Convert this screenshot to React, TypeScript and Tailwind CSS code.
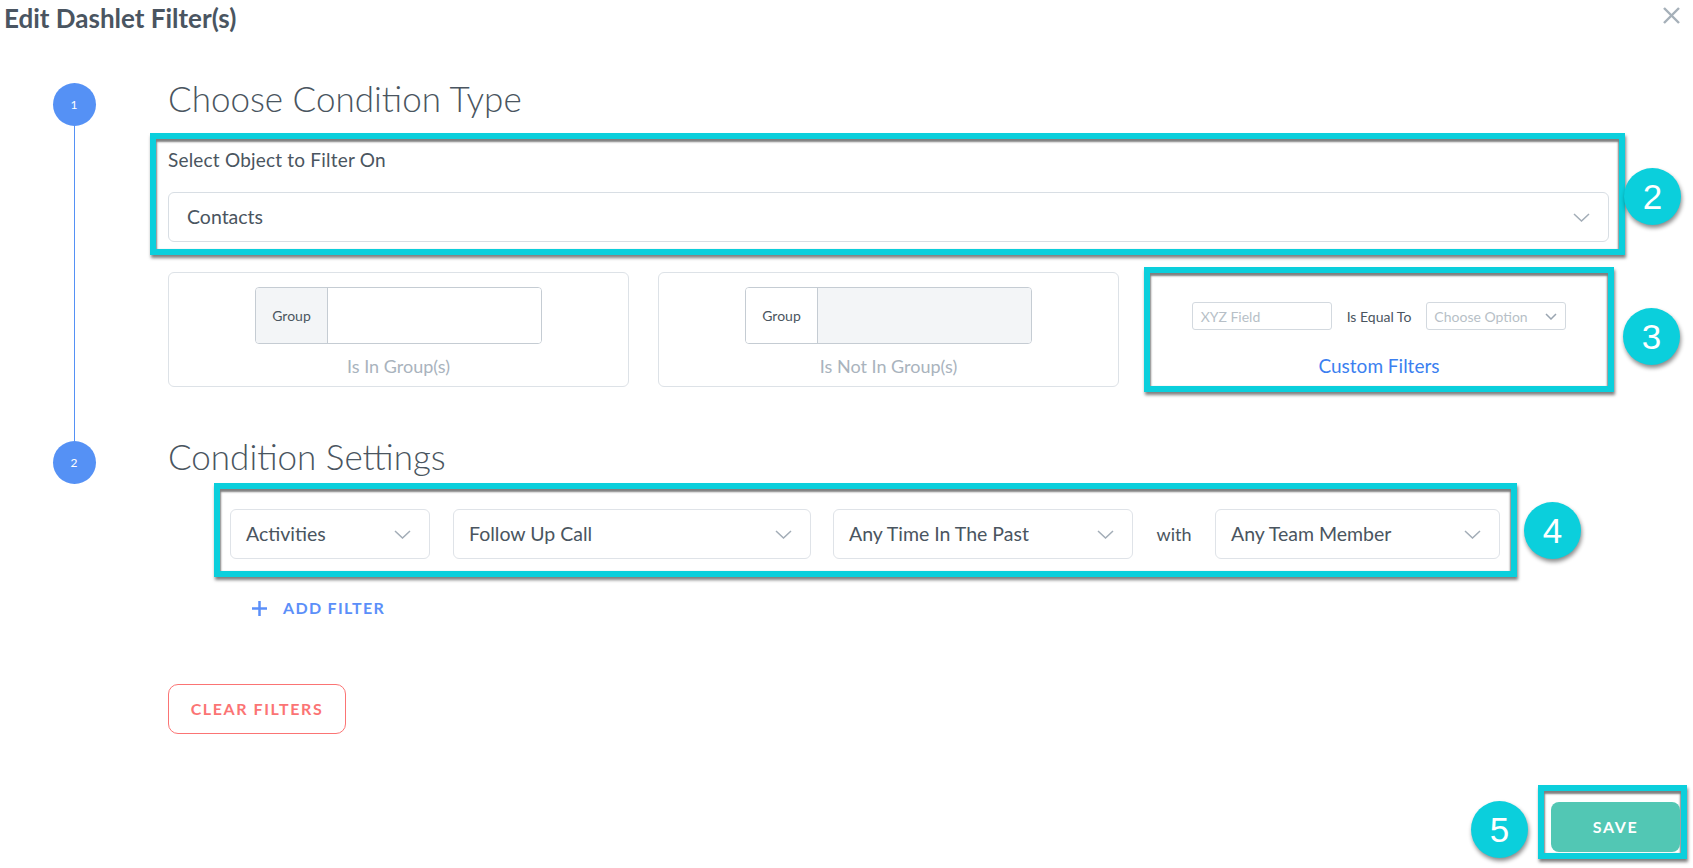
import React from 'react'

// annotation frame used by the screenshot callouts
const frame =
  'border-[6px] border-[#0bcfdc] bg-white shadow-[1px_3px_3px_rgba(0,0,0,0.5),inset_0_2px_2px_1px_rgba(0,0,0,0.5)]'

function Badge({ n, className }: { n: number; className: string }) {
  return (
    <div
      className={`absolute w-[57px] h-[57px] rounded-full bg-[#0bcfdc] text-white flex items-center justify-center text-[35px] leading-none font-['Liberation_Sans',Arial,sans-serif] shadow-[1px_3px_4px_rgba(0,0,0,0.45)] ${className}`}
    >
      {n}
    </div>
  )
}

function Chevron({ small }: { small?: boolean }) {
  return small ? (
    <svg width="12" height="7" viewBox="0 0 12 7" fill="none">
      <polyline points="1,1 6,6 11,1" stroke="#9aa5b1" strokeWidth="1.5" />
    </svg>
  ) : (
    <svg width="17" height="9" viewBox="0 0 17 9" fill="none">
      <polyline points="1,1 8.5,8 16,1" stroke="#a3adb7" strokeWidth="1.5" />
    </svg>
  )
}

function Select({ label, w }: { label: string; w: string }) {
  return (
    <div
      className={`h-[50px] shrink-0 flex items-center justify-between rounded-[6px] border border-[#dfe3e8] bg-white pl-[15px] pr-[18px] text-[19.5px] text-[#4a5560] ${w}`}
    >
      <span>{label}</span>
      <Chevron />
    </div>
  )
}

function Step({ n }: { n: number }) {
  return (
    <div className="w-[43px] h-[43px] rounded-full bg-[#5591f5] text-white text-[12px] flex items-center justify-center shrink-0">
      {n}
    </div>
  )
}

function GroupCard({ label, shaded }: { label: string; shaded: 'addon' | 'field' }) {
  return (
    <div className="h-[115px] rounded-[6px] border border-[#dde2e7] bg-white flex flex-col items-center pt-[14px]">
      <div className="w-[287px] h-[57px] flex rounded-[4px] border border-[#c5ccd3] overflow-hidden">
        <div
          className={`w-[72px] flex items-center justify-center border-r border-[#c5ccd3] text-[14px] text-[#4a5560] ${
            shaded === 'addon' ? 'bg-[#f3f5f7]' : 'bg-white'
          }`}
        >
          Group
        </div>
        <div className={`flex-1 ${shaded === 'field' ? 'bg-[#f3f5f7]' : 'bg-white'}`} />
      </div>
      <div className="mt-[11px] text-[18px] leading-[22px] text-[#a9b3bd]">{label}</div>
    </div>
  )
}

export default function App() {
  return (
    <div className="relative w-[1693px] h-[868px] overflow-hidden bg-white font-['Lato',sans-serif]">
      {/* header */}
      <div className="pt-[3px] px-[4px] text-[26px] leading-[30px] font-bold text-[#4a5561]">
        Edit Dashlet Filter(s)
      </div>
      <button className="absolute top-[7px] right-[13px]">
        <svg width="17" height="17" viewBox="0 0 17 17" fill="none">
          <line x1="1" y1="1" x2="16" y2="16" stroke="#a6b0b9" strokeWidth="2.4" />
          <line x1="16" y1="1" x2="1" y2="16" stroke="#a6b0b9" strokeWidth="2.4" />
        </svg>
      </button>

      {/* step 1 */}
      <div className="flex mt-[50px]">
        <div className="w-[148px] flex flex-col items-center shrink-0">
          <Step n={1} />
          <div className="w-px flex-1 bg-[#5591f5]" />
        </div>
        <div className="ml-[20px] w-[1441px] pb-[54px]">
          <h2 className="-mt-[5px] text-[35px] leading-[41px] font-light text-[#4a5560]">
            Choose Condition Type
          </h2>

          <div className={`relative mt-[14px] -ml-[18px] -mr-[16px] pl-[12px] pr-[10px] pt-[9px] pb-[7px] ${frame}`}>
            <div className="text-[19px] leading-[24px] tracking-[0.2px] text-[#4a5560]">Select Object to Filter On</div>
            <div className="mt-[20px] h-[50px] flex items-center justify-between rounded-[6px] border border-[#d8dee4] pl-[18px] pr-[18px] text-[19.5px] text-[#4a5560]">
              <span>Contacts</span>
              <Chevron />
            </div>
            <Badge n={2} className="left-full ml-[5px] top-[29px]" />
          </div>

          <div className="mt-[17px] grid grid-cols-3 gap-x-[29px]">
            <GroupCard label="Is In Group(s)" shaded="addon" />
            <GroupCard label="Is Not In Group(s)" shaded="field" />
            <div className={`relative -ml-[4px] -mr-[5px] -mt-[5px] -mb-[5px] flex flex-col items-center pt-[29px] ${frame}`}>
              <div className="flex items-center gap-[15px]">
                <div className="w-[140px] h-[28px] rounded-[3px] border border-[#d3d9df] px-[8px] flex items-center text-[14px] text-[#b7bfc7]">
                  XYZ Field
                </div>
                <span className="text-[14px] text-[#4a5560]">Is Equal To</span>
                <div className="w-[140px] h-[28px] rounded-[3px] border border-[#d3d9df] pl-[7px] pr-[8px] flex items-center justify-between text-[14px] text-[#b7bfc7]">
                  <span>Choose Option</span>
                  <Chevron small />
                </div>
              </div>
              <div className="mt-[25px] text-[19px] leading-[22px] text-[#3b7ff0]">Custom Filters</div>
              <Badge n={3} className="left-full ml-[15px] top-[35px]" />
            </div>
          </div>
        </div>
      </div>

      {/* step 2 */}
      <div className="flex">
        <div className="w-[148px] flex flex-col items-center shrink-0">
          <Step n={2} />
        </div>
        <div className="ml-[20px] w-[1441px]">
          <h2 className="-mt-[5px] text-[35px] leading-[41px] font-light text-[#4a5560]">
            Condition Settings
          </h2>

          <div className={`relative mt-[6px] ml-[46px] w-fit flex items-center pl-[10px] pr-[11px] pt-[20px] pb-[12px] ${frame}`}>
            <Select label="Activities" w="w-[200px]" />
            <div className="w-[23px]" />
            <Select label="Follow Up Call" w="w-[358px]" />
            <div className="w-[22px]" />
            <Select label="Any Time In The Past" w="w-[300px]" />
            <span className="w-[82px] text-center text-[18px] text-[#4a5560]">with</span>
            <Select label="Any Team Member" w="w-[285px]" />
            <Badge n={4} className="left-full ml-[13px] top-[13px]" />
          </div>

          <div className="mt-[21px] ml-[83px] flex items-center h-[20px]">
            <svg width="17" height="17" viewBox="0 0 17 17" fill="none">
              <line x1="8.5" y1="1" x2="8.5" y2="16" stroke="#5b8ff9" strokeWidth="2.5" />
              <line x1="1" y1="8.5" x2="16" y2="8.5" stroke="#5b8ff9" strokeWidth="2.5" />
            </svg>
            <span className="ml-[15px] text-[16px] font-bold tracking-[1.3px] text-[#5b8ff9]">ADD FILTER</span>
          </div>

          <button className="mt-[66px] w-[178px] h-[50px] rounded-[10px] border-[1.5px] border-[#fb7474] text-[16px] font-bold tracking-[1.6px] text-[#fb7474]">
            CLEAR FILTERS
          </button>
        </div>
      </div>

      {/* footer */}
      <div className="mt-[51px] flex justify-end pr-[6px]">
        <div className={`relative pl-[7px] pr-[1px] pt-[11px] pb-[1px] ${frame}`}>
          <button className="w-[129px] h-[50px] rounded-[8px] bg-[#52c7b4] text-white text-[16px] font-bold tracking-[1.6px]">
            SAVE
          </button>
          <Badge n={5} className="right-full mr-[16px] top-[10px]" />
        </div>
      </div>
    </div>
  )
}
